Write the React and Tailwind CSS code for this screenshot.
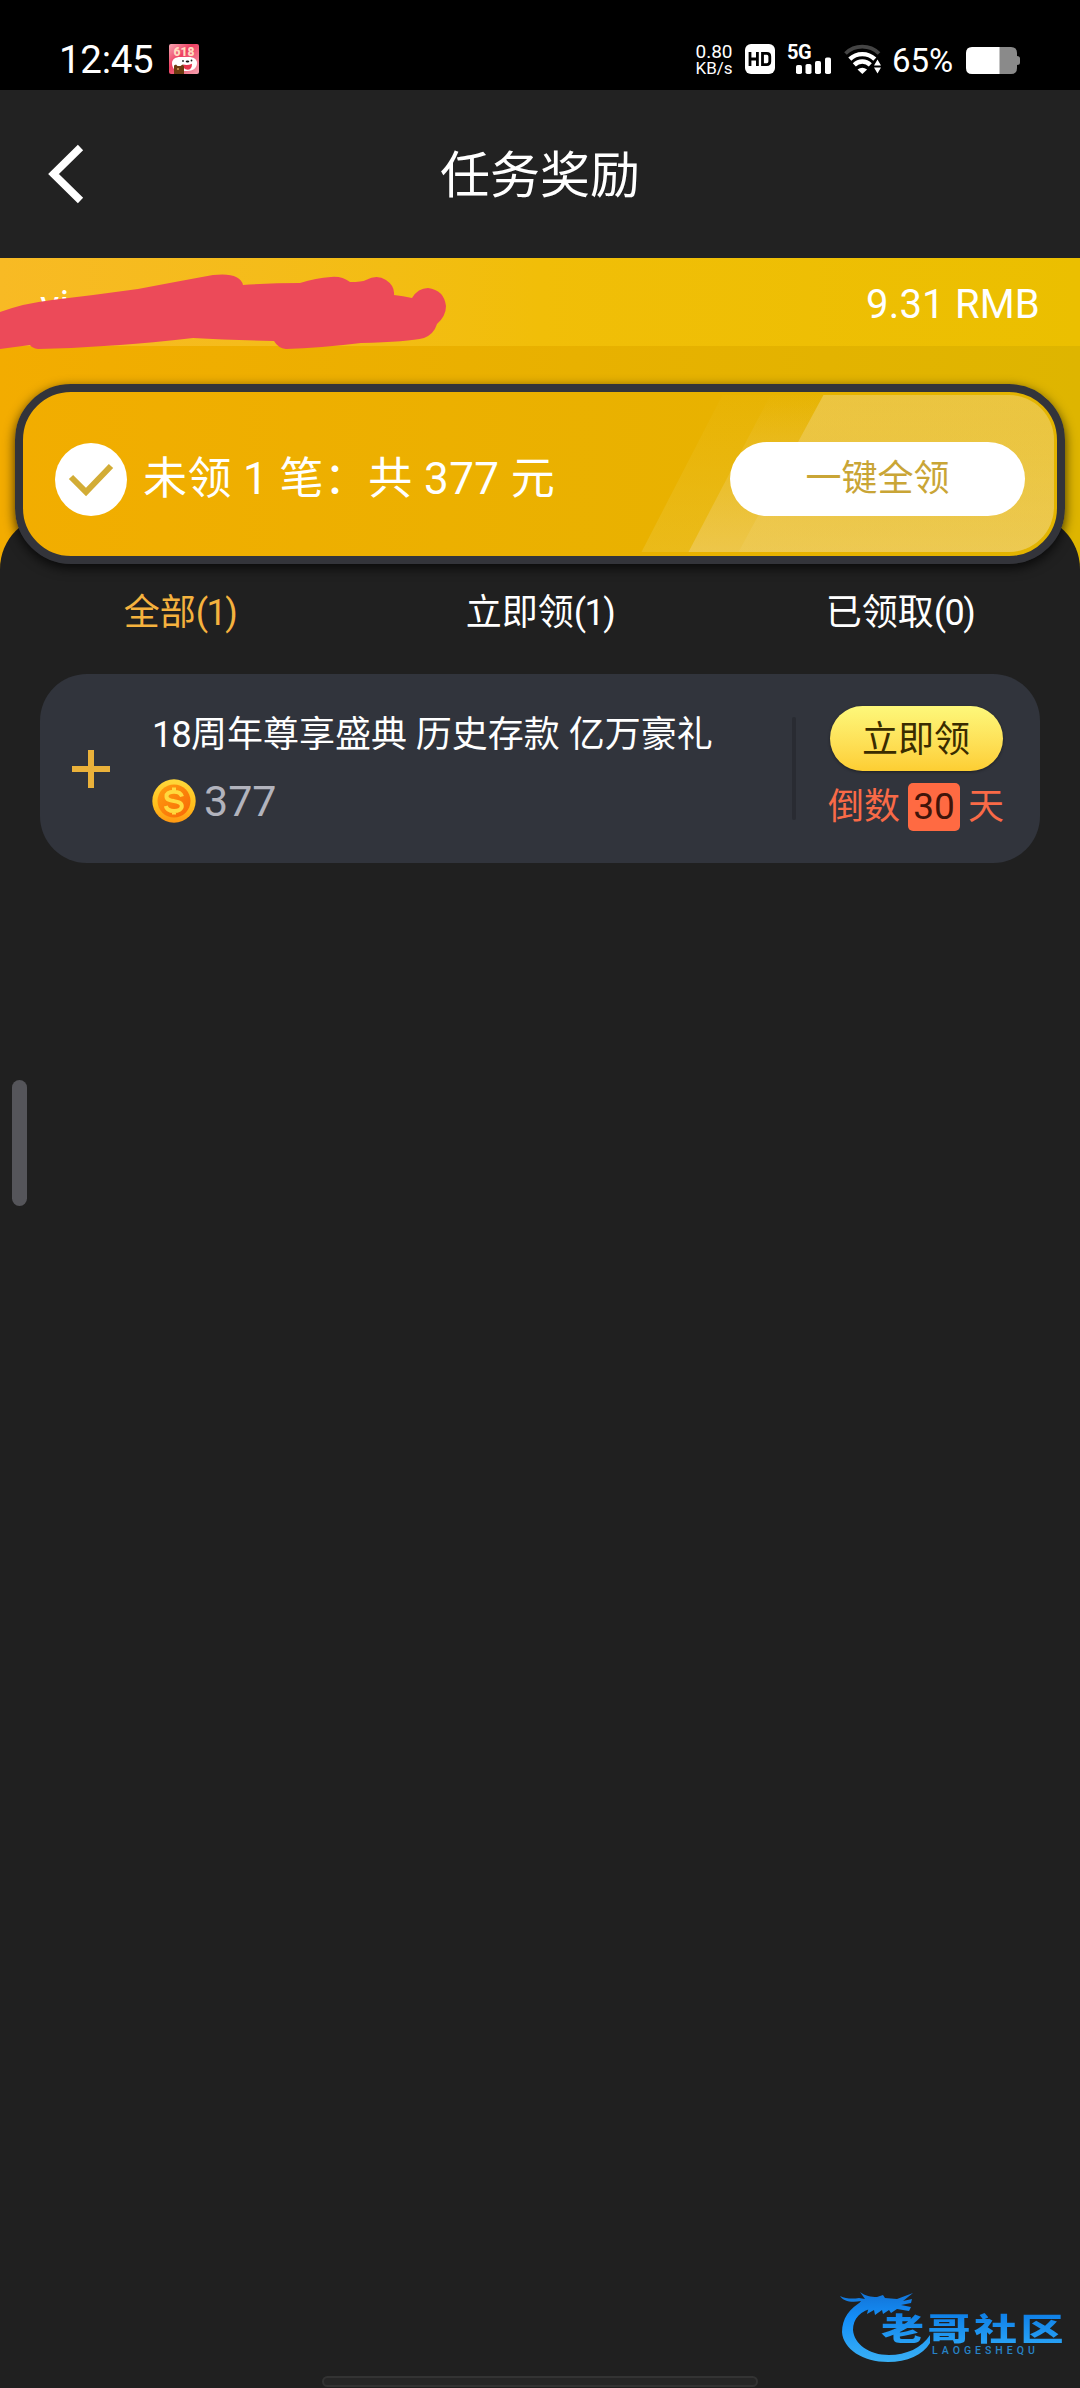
import clsx from 'clsx';

const tabs = [
  { id: 'all', label: '全部', count: 1 },
  { id: 'ready', label: '立即领', count: 1 },
  { id: 'done', label: '已领取', count: 0 },
];

function PromoIcon() {
  return (
    <svg className="ml-[17px] mt-[44px] h-[30px] w-[30px]" viewBox="0 0 30 30">
      <defs>
        <linearGradient id="promo" x1="0" y1="0" x2="1" y2="1">
          <stop offset="0" stopColor="#f7a9b4" />
          <stop offset="0.4" stopColor="#ee3f62" />
          <stop offset="1" stopColor="#f5a3b0" />
        </linearGradient>
      </defs>
      <rect width="30" height="30" rx="2" fill="url(#promo)" />
      <text x="15" y="12" textAnchor="middle" fontFamily="Roboto" fontWeight="900" fontSize="12" fill="#ffdcc0">618</text>
      <path d="M3 19c0-4 4-6 8-6h9c4 0 8 2 8 6 0 5-4 8-10 8H9c-4 0-6-4-6-8z" fill="#fff" />
      <circle cx="14" cy="17" r="0.900" fill="#222" />
      <circle cx="22.500" cy="16.500" r="0.900" fill="#222" />
      <ellipse cx="18.500" cy="17.500" rx="1.800" ry="1.100" fill="#111" />
      <path d="M14 20.500c3 .8 6 .6 9-.8 0 4-1.500 6-4.500 6s-4.500-2-4.500-5.200z" fill="#e5344c" />
      <path d="M5 30v-8.500l2-1 1.500 1.500h3l2-1.500 1.500 1.500v8z" fill="#6b3c10" />
      <circle cx="9" cy="25" r="1" fill="#d9a15a" />
    </svg>
  );
}

function StatusBar() {
  return (
    <div className="flex h-[90px] bg-black text-white">
      <span className="ml-[59px] mt-[37px] w-[93px] text-[38.5px] leading-[46px] tracking-[-0.3px]">12:45</span>
      <PromoIcon />
      <div className="ml-auto mr-[60px] flex items-start">
        <div className="mt-[41px] flex w-[38px] flex-col items-center text-[19px]">
          <span className="leading-[21px]">0.80</span>
          <span className="mt-[-3px] text-[17px] leading-[19px]">KB/s</span>
        </div>
        <svg className="ml-[12px] mt-[44px] h-[30px] w-[30px]" viewBox="0 0 30 30" fill="none" stroke="#000" strokeWidth="2.800">
          <rect width="30" height="30" rx="6" fill="#fff" stroke="none" />
          <path d="M5 8v14M12.400 8v14M5 15h7.400M17.500 9.400h4.300q3 0 3 3v5.200q0 3-3 3h-4.300z" />
        </svg>
        <div className="relative ml-[12px] mt-[44px] h-[30px] w-[45px]">
          <span className="block text-[20px] font-bold leading-[16px] tracking-[-0.5px]">5G</span>
          <svg className="absolute left-0 top-0" width="45" height="30" viewBox="0 0 45 30" fill="#fff">
            <rect x="9" y="21" width="6" height="9" rx="1.800" />
            <rect x="18.500" y="20" width="6" height="10" rx="1.800" />
            <rect x="28" y="17" width="6" height="13" rx="1.800" />
            <rect x="38" y="13.500" width="6" height="16.500" rx="1.800" />
          </svg>
        </div>
        <svg className="ml-[12px] mt-[44px] h-[30px] w-[38px]" viewBox="0 0 38 30" fill="none" stroke="#fff" strokeWidth="4.400">
          <path d="M1.500 9.500a24 24 0 0 1 33.500 0" stroke="#444" strokeWidth="3.800" />
          <path d="M5.800 15.200a18 18 0 0 1 25 0" />
          <path d="M10.300 20.800a11.500 11.500 0 0 1 16 0" />
          <path d="M13.500 25.400q4.800-3.500 9.600 0L18.300 30z" fill="#fff" stroke="none" />
          <path d="M33.500 15.500l3.500 6h-7zM33.500 29.500l3.500-6h-7z" fill="#fff" stroke="#000" strokeWidth="1" paintOrder="stroke" />
        </svg>
        <span className="ml-[10px] mt-[41px] w-[66px] text-[33px] leading-[40px]">65%</span>
        <svg className="ml-[8px] mt-[47px] h-[27px] w-[54px]" viewBox="0 0 54 27">
          <path d="M33 0h12q6 0 6 6v3q3 0 3 2.500v4q0 2.500-3 2.500v3q0 6-6 6H33z" fill="#8a8a8a" />
          <path d="M6 0h27.500v27H6q-6 0-6-6V6q0-6 6-6z" fill="#fff" />
        </svg>
      </div>
    </div>
  );
}

function Header() {
  return (
    <header className="relative flex h-[168px] items-center justify-center bg-[#222222]">
      <svg className="absolute left-[47px] top-[54px]" width="38" height="60" viewBox="0 0 38 60" fill="none" stroke="#fff" strokeWidth="7.500">
        <path d="M33.500 3.500L6.500 30l27 26.500" />
      </svg>
      <h1 className="mt-[4px] text-[50px] font-normal leading-[60px] text-white">任务奖励</h1>
    </header>
  );
}

function ClaimCard() {
  return (
    <section className="relative mx-[15px] flex h-[180px] items-center rounded-[56px] border-8 border-[#33343a] bg-linear-to-r from-[#f2ad00] to-[#e3b400] pl-[32px] pr-[32px] pt-[10px] shadow-[0_4px_12px_rgba(0,0,0,0.75)]">
      <svg className="absolute inset-0 h-full w-full" viewBox="0 0 1034 164">
        <defs>
          <linearGradient id="stripeA" x1="0" y1="0" x2="0" y2="1">
            <stop offset="0" stopColor="#edc840" stopOpacity="0.05" />
            <stop offset="1" stopColor="#edc840" stopOpacity="0.4" />
          </linearGradient>
          <linearGradient id="stripeB" x1="0" y1="0" x2="0" y2="1">
            <stop offset="0" stopColor="#f0d27a" stopOpacity="0" />
            <stop offset="1" stopColor="#f0d27a" stopOpacity="0.5" />
          </linearGradient>
          <linearGradient id="stripeC" x1="0" y1="0" x2="0" y2="1">
            <stop offset="0" stopColor="#efd06a" stopOpacity="0.6" />
            <stop offset="1" stopColor="#efd06a" stopOpacity="0.25" />
          </linearGradient>
          <clipPath id="sheen">
            <rect x="3" y="3" width="1028" height="157" rx="45" />
          </clipPath>
        </defs>
        <g clipPath="url(#sheen)">
          <path d="M618 161L700 2H1034V161z" fill="url(#stripeA)" />
          <path d="M665 161L748 2H1034V161z" fill="url(#stripeB)" />
          <path d="M715 161L801 2H1034V161z" fill="url(#stripeC)" />
        </g>
      </svg>
      <svg className="relative h-[73px] w-[72px]" viewBox="0 0 72 73">
        <ellipse cx="36" cy="36.500" rx="36" ry="36.500" fill="#fff" />
        <path d="M16 34l15 15 25-26" fill="none" stroke="#d2ac35" strokeWidth="6" />
      </svg>
      <p className="relative ml-[16px] whitespace-nowrap text-[44px] leading-[60px] tracking-[0.4px] text-white">
        未领 1 笔：共 377 元
      </p>
      <button className="relative ml-auto h-[74px] w-[295px] rounded-full bg-white text-[36px] leading-[40px] text-[#c9a536]">
        一键全领
      </button>
    </section>
  );
}

function Wallet() {
  return (
    <div className="relative h-[342px] bg-linear-to-r from-[#f3ac00] to-[#deb500]">
      <div className="relative flex h-[88px] items-center justify-between bg-linear-to-r from-[#f8ba24] via-[#f1be08] to-[#ebbf00] px-[40px] text-[40px] leading-[48px] text-white">
        <span className="mt-[7px]">vi</span>
        <span className="mt-[5px] tracking-[0.2px]">9.31 RMB</span>
        <svg className="absolute left-0 top-0" width="460" height="96" viewBox="0 0 460 96">
          <path
            d="M0 54Q25 45 52 42Q95 37 138 31Q180 23 213 17Q240 14 243 27Q272 25 300 25Q316 20 331 19Q342 18 350 24Q362 24 366 22Q377 16 386 22Q395 28 394 37Q403 38 412 40Q418 30 428 30Q444 32 446 48Q446 58 437 66Q434 76 424 80Q408 84 361 85Q320 90 286 91Q278 90 274 83Q230 82 193 80Q150 85 120 87Q80 90 38 91Q32 90 30 87L0 91z"
            fill="#ec4a59"
          />
        </svg>
      </div>
      <div className="absolute inset-x-0 bottom-0 h-[85px] rounded-t-[54px] bg-[#202020]" />
      <div className="pt-[38px]">
        <ClaimCard />
      </div>
    </div>
  );
}

function Coin() {
  return (
    <svg className="h-[44px] w-[44px]" viewBox="0 0 44 44">
      <defs>
        <linearGradient id="rim" x1="0" y1="0" x2="0" y2="1">
          <stop offset="0" stopColor="#ffd83b" />
          <stop offset="0.6" stopColor="#ffbf1c" />
          <stop offset="1" stopColor="#ff9712" />
        </linearGradient>
        <linearGradient id="face" x1="0" y1="0" x2="1" y2="1">
          <stop offset="0" stopColor="#ff9f10" />
          <stop offset="1" stopColor="#f76606" />
        </linearGradient>
      </defs>
      <circle cx="22" cy="22" r="21.700" fill="url(#rim)" />
      <circle cx="22" cy="22" r="16.500" fill="url(#face)" />
      <path
        d="M22 8.500v4M22 31.500v4M30 17.500c-1-3.300-4-4.800-8-4.800-4.500 0-7.500 1.700-7.500 4.700 0 3.400 3.500 4 7.500 4.700s7.800 1.400 7.800 5c0 3.200-3.300 4.900-7.800 4.900-4.300 0-7.500-1.800-8.200-5"
        fill="none"
        stroke="#ffd93e"
        strokeWidth="4"
      />
    </svg>
  );
}

function RewardCard() {
  return (
    <article className="mx-[40px] flex h-[189px] items-center rounded-[47px] bg-[#31343c]">
      <svg className="ml-[32px] h-[38px] w-[38px] shrink-0" viewBox="0 0 38 38" stroke="#eab13a" strokeWidth="6">
        <path d="M19 0v38M0 19h38" />
      </svg>
      <div className="ml-[42px] w-[640px] shrink-0">
        <h2 className="whitespace-nowrap text-[36px] font-normal leading-[44px] text-white">
          <span className="tracking-[-0.8px]">18</span>
          周年尊享盛典 历史存款 亿万豪礼
        </h2>
        <div className="mt-[20px] flex items-center gap-[8px]">
          <Coin />
          <span className="text-[43px] leading-[48px] text-[#b2b3bd]">377</span>
        </div>
      </div>
      <div className="h-[103px] w-[4px] shrink-0 rounded bg-[#292b32]" />
      <div className="ml-[33px] flex w-[174px] shrink-0 flex-col items-center">
        <button className="h-[65px] w-[173px] rounded-full bg-linear-to-b from-[#fdf87a] to-[#fdce32] pt-[2px] text-[36px] leading-[40px] text-[#3a2c00] shadow-[0_1px_3px_rgba(0,0,0,0.4)]">
          立即领
        </button>
        <div className="mt-[12px] flex items-center gap-[8px] whitespace-nowrap text-[36px] leading-[48px] text-[#f96a47]">
          <span>倒数</span>
          <span className="w-[52px] rounded-[5px] bg-[#ff6a42] text-center text-[37px] text-[#40140a]">30</span>
          <span>天</span>
        </div>
      </div>
    </article>
  );
}

function Watermark() {
  return (
    <div className="absolute right-[15px] top-[2288px] h-[76px] w-[226px]">
      <svg className="absolute left-0 top-0" width="100" height="76" viewBox="0 0 100 76">
        <defs>
          <linearGradient id="dragon" gradientUnits="userSpaceOnUse" x1="0" y1="4" x2="0" y2="74">
            <stop offset="0" stopColor="#1273d6" />
            <stop offset="0.4" stopColor="#1490fa" />
            <stop offset="1" stopColor="#3ab0f4" />
          </linearGradient>
        </defs>
        <g fill="url(#dragon)">
          <path d="M24 13C10 20 3 31 3 44C4 61 24 74 49 74C68 74 84 67 91 55L91 47C83 60 67 67 50 67C30 67 15 56 14 42C14 31 21 22 36 20z" />
          <path d="M1 8C7 11 14 11 20 10L26 11L21 4C26 8 32 9 38 9L44 7L46 10L58 11L74 5L64 13L73 11L72 15L62 17L72 19L70 23L58 21L52 25L50 22L44 26L43 22L36 27L35 22L28 26L30 18L18 18L22 13C12 15 4 13 1 8z" />
        </g>
      </svg>
      <span className="absolute left-[42px] top-[17px] origin-center scale-y-[0.72] whitespace-nowrap bg-linear-to-b from-[#0d7de6] to-[#2aa4f6] bg-clip-text text-[43px] font-black leading-[48px] tracking-[3.5px] text-transparent">
        老哥社区
      </span>
      <span className="absolute left-[93px] top-[57px] text-[10.5px] font-medium leading-[12px] tracking-[4px] text-[#2783c6]">LAOGESHEQU</span>
    </div>
  );
}

export default function App() {
  return (
    <div className="relative h-[2388px] w-[1080px] overflow-hidden bg-[#202020] font-[Roboto,'Noto_Sans_CJK_SC',sans-serif]">
      <StatusBar />
      <Header />
      <Wallet />
      <nav className="relative grid h-[74px] grid-cols-3 text-center text-[36px] leading-[26px]">
        {tabs.map((tab, i) => (
          <span key={tab.id} className={clsx(i === 0 ? 'text-[#f5b23e]' : 'text-white')}>
            {tab.label}
            <span className="tracking-[-1.5px]">({tab.count})</span>
          </span>
        ))}
      </nav>
      <RewardCard />
      <div className="absolute left-[12px] top-[1080px] h-[126px] w-[15px] rounded-full bg-[#55555a]" />
      <Watermark />
      <div className="absolute left-[322px] top-[2376px] h-[11px] w-[436px] rounded-full border-2 border-[#333333] bg-[#262626]" />
    </div>
  );
}
